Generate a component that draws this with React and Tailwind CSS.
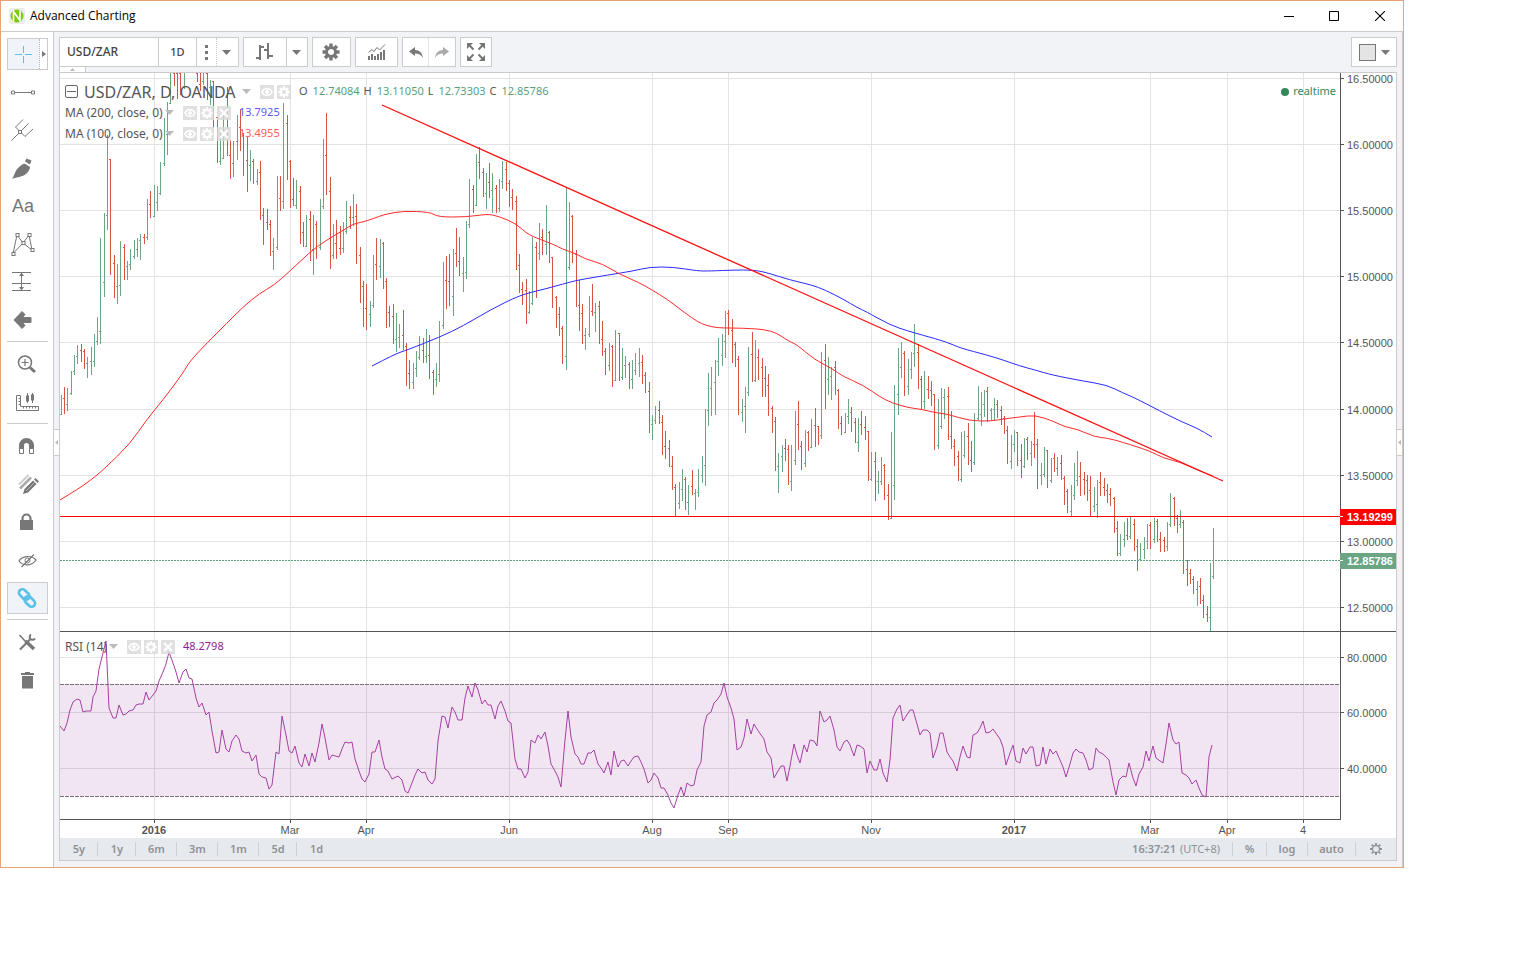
import React from 'react';

// x, high, low, tick, 1 = up / 0 = down
const BARS = [
  [61,395,415,414,1],[64,387,414,398,0],[67,388,411,404,1],[71,371,395,393,1],[74,355,375,371,1],[77,345,364,356,1],
  [81,344,362,350,0],[84,349,369,351,0],[87,357,378,363,1],[91,347,375,361,1],[94,334,367,361,1],[97,317,345,341,1],
  [100,238,344,331,1],[104,213,297,282,1],[107,135,230,215,1],[110,159,275,159,0],[114,255,298,263,0],[117,264,304,286,1],
  [120,241,296,285,1],[124,244,280,247,0],[127,261,280,266,1],[130,249,270,264,1],[134,240,259,256,1],[137,238,257,249,1],
  [140,234,260,240,1],[144,234,244,237,0],[147,199,240,237,1],[150,191,218,204,0],[154,185,217,216,1],[157,186,211,202,1],
  [160,162,195,193,1],[164,118,166,163,1],[167,102,155,134,1],[170,73,104,103,1],[174,73,86,73,0],[177,73,99,73,0],
  [180,73,95,73,0],[184,73,89,86,1],[197,73,82,73,0],[200,73,91,84,0],[203,73,85,81,1],[207,73,100,73,0],
  [210,80,105,87,1],[213,81,128,81,0],[217,117,163,117,0],[220,129,165,161,1],[223,114,159,158,1],[227,87,156,116,0],
  [230,140,179,155,0],[233,141,177,163,1],[237,115,160,141,1],[240,109,151,127,0],[243,133,176,133,0],[247,137,192,160,0],
  [250,150,181,165,1],[253,159,184,161,0],[257,169,185,181,1],[260,161,220,172,0],[263,208,245,215,0],[267,209,230,222,0],
  [270,220,256,224,0],[273,238,270,251,1],[277,176,250,247,1],[280,176,211,198,0],[283,103,209,201,1],[287,115,180,123,0],
  [290,160,208,161,0],[293,178,206,199,0],[296,180,209,205,1],[300,186,244,191,0],[303,222,247,232,0],[306,215,247,246,1],
  [310,211,261,219,0],[313,215,275,249,1],[316,221,259,224,0],[320,199,250,247,1],[323,139,209,206,1],[326,113,195,155,0],
  [330,177,269,191,0],[333,224,259,255,1],[336,220,259,243,0],[340,226,255,248,0],[343,222,253,248,1],[346,201,234,231,1],
  [350,206,229,217,0],[353,194,226,217,1],[356,204,264,216,0],[360,247,303,255,0],[363,281,327,286,0],[366,284,330,308,0],
  [370,301,327,314,1],[373,255,308,305,1],[376,238,280,264,0],[380,239,278,266,1],[383,242,289,243,0],[386,278,328,281,0],
  [389,306,327,312,0],[393,304,344,316,0],[396,313,352,339,1],[399,324,348,337,1],[403,310,350,335,0],[406,343,386,346,0],
  [409,360,389,373,0],[413,363,389,382,1],[416,351,377,368,1],[419,336,360,357,1],[423,338,363,350,0],[426,329,363,356,1],
  [429,335,379,355,0],[433,370,395,372,0],[436,363,387,379,1],[439,321,382,374,1],[443,262,329,325,1],[446,256,309,280,0],
  [449,254,306,281,0],[453,249,316,296,1],[456,228,267,253,0],[459,237,276,261,0],[463,257,292,273,1],[466,221,279,272,1],
  [469,179,228,224,1],[473,185,213,189,0],[476,154,206,205,1],[479,147,179,162,0],[483,168,197,172,0],[486,173,209,193,1],
  [489,163,198,182,0],[492,173,213,190,1],[496,185,213,188,0],[499,179,212,208,1],[502,161,189,181,1],[506,162,191,169,0],
  [509,180,207,183,0],[512,189,210,197,0],[516,196,270,201,0],[519,254,293,265,0],[522,282,305,289,0],[526,279,324,290,0],
  [529,291,314,312,1],[532,237,305,303,1],[536,242,298,247,0],[539,223,260,253,1],[542,229,255,237,0],[546,205,255,244,1],
  [549,231,263,232,0],[552,257,308,257,0],[556,296,328,297,0],[559,307,336,314,0],[562,326,364,328,0],[566,187,370,356,1],
  [569,202,270,267,1],[572,215,263,216,0],[576,250,307,254,0],[579,280,331,305,0],[582,304,344,313,0],[585,328,350,335,1],
  [589,296,337,334,1],[592,284,316,311,0],[595,303,332,312,1],[599,301,344,306,0],[602,321,356,339,0],[605,348,375,351,0],
  [609,343,371,365,1],[612,345,387,346,0],[615,330,381,380,1],[619,333,381,333,0],[622,348,380,377,1],[625,356,378,365,1],
  [629,362,389,364,0],[632,360,389,379,1],[635,353,375,370,1],[639,348,377,363,1],[642,355,384,362,0],[645,372,393,375,0],
  [649,382,433,391,0],[652,415,440,424,1],[655,406,424,420,1],[659,401,424,410,0],[662,415,455,422,0],[665,431,459,446,0],
  [669,440,467,448,0],[672,456,490,466,0],[675,484,516,487,0],[679,482,509,503,1],[682,469,501,489,1],[685,477,510,479,0],
  [688,485,515,502,1],[692,470,495,486,0],[695,489,510,493,1],[698,469,497,492,1],[702,456,483,475,1],[705,409,486,465,1],
  [708,373,426,410,1],[711,367,416,388,1],[715,360,415,382,1],[718,338,376,361,1],[722,334,366,355,1],[725,311,358,341,1],
  [728,310,335,313,0],[732,319,363,330,0],[735,342,367,344,0],[738,356,415,359,0],[742,399,422,412,1],[745,387,433,406,1],
  [748,347,396,392,1],[752,332,382,354,0],[755,340,382,380,1],[758,349,380,357,0],[762,358,397,367,0],[765,366,397,378,0],
  [768,374,416,385,0],[772,406,433,408,0],[775,417,471,421,0],[778,453,493,466,1],[782,445,472,456,1],[785,439,461,448,0],
  [788,445,485,449,0],[791,445,491,481,1],[795,411,465,460,1],[798,401,450,424,0],[801,441,470,446,0],[805,430,467,463,1],
  [808,431,451,432,0],[811,419,448,447,1],[815,408,447,425,0],[818,426,445,426,0],[821,352,439,435,1],[825,344,409,360,0],
  [828,357,395,379,1],[831,367,400,376,1],[835,361,395,367,0],[838,389,429,390,0],[841,416,435,423,0],[845,413,433,432,1],
  [848,399,424,416,1],[851,407,432,412,0],[855,418,443,422,0],[858,418,452,442,1],[861,411,435,424,0],[865,416,440,427,0],
  [868,431,481,431,0],[871,452,481,479,1],[875,452,501,461,0],[878,471,494,481,1],[881,457,485,481,1],[884,464,500,465,0],
  [888,484,520,495,0],[891,432,519,518,1],[894,385,500,485,1],[898,348,415,394,1],[901,342,378,367,1],[904,351,396,353,0],
  [908,359,395,386,1],[911,352,379,369,1],[914,324,367,353,1],[918,344,389,352,0],[921,376,409,379,0],[924,371,409,401,1],
  [928,376,399,389,0],[931,381,406,390,0],[934,394,450,394,0],[938,399,449,445,1],[941,388,429,426,1],[944,389,419,397,1],
  [948,387,440,396,0],[951,411,449,436,0],[954,439,466,446,0],[958,451,481,456,0],[961,432,482,479,1],[964,431,458,455,1],
  [968,423,465,436,0],[971,441,472,460,0],[974,413,465,462,1],[978,386,420,418,1],[981,392,426,414,1],[984,390,417,404,1],
  [987,387,422,391,0],[991,408,421,410,1],[994,398,421,409,1],[997,400,418,404,0],[1001,406,425,410,0],[1004,416,434,418,0],
  [1007,426,464,430,0],[1011,435,469,461,1],[1014,430,452,444,1],[1017,432,466,432,0],[1021,444,478,460,0],[1024,438,468,466,1],
  [1027,437,460,439,0],[1031,441,466,453,1],[1034,412,458,444,0],[1037,439,489,444,0],[1041,463,485,475,1],[1044,447,477,474,1],
  [1047,450,488,450,0],[1051,458,483,480,1],[1054,453,472,458,0],[1057,457,476,468,1],[1061,455,480,463,0],[1064,476,505,478,0],
  [1067,489,513,491,0],[1071,485,516,511,1],[1074,463,500,495,1],[1077,451,486,480,1],[1080,462,496,476,0],[1084,472,495,479,0],
  [1087,475,501,480,0],[1090,476,516,490,0],[1094,487,512,506,1],[1097,480,518,504,1],[1100,472,496,482,0],[1104,478,496,487,0],
  [1107,484,503,490,0],[1110,488,506,494,0],[1114,497,533,498,0],[1117,521,556,528,0],[1120,534,556,553,1],[1124,522,547,539,1],
  [1127,518,540,535,0],[1130,517,539,536,1],[1134,519,551,524,0],[1137,539,571,546,0],[1140,543,561,559,1],[1144,537,559,549,1],
  [1147,524,549,541,1],[1150,522,549,525,0],[1154,518,543,539,1],[1157,519,542,521,0],[1160,532,552,539,0],[1164,537,552,540,0],
  [1167,522,551,546,1],[1170,493,527,524,1],[1174,497,526,498,0],[1177,515,533,518,0],[1180,510,528,524,1],[1183,520,574,522,0],
  [1187,560,586,569,0],[1190,569,584,573,0],[1193,576,594,579,0],[1197,581,606,589,1],[1200,578,604,586,0],[1203,595,618,600,0],
  [1207,606,622,614,0],[1210,563,631,617,1],[1213,528,579,576,1],
];

const MA100 =
  '60,500 80,488 96,476 105,468 130,444 147,419 163,400 183,373 190,361 207,343 227,323 243,307 260,293 273,286 290,271 310,252 325,241 347,228 353,224 367,221 380,216 387,214 403,211 430,212 438,217 467,217 487,214 498,216 517,224 528,235 553,244 562,249 577,254 585,259 603,264 617,273 640,283 652,290 667,299 685,313 698,322 705,325 717,328 742,328 772,330 790,342 796,344 815,360 833,369 842,376 863,385 880,397 892,403 910,408 920,409 937,413 947,414 970,421 992,421 1003,419 1020,417 1035,415 1053,421 1065,427 1077,429 1095,437 1107,438 1122,442 1150,451 1163,458 1180,462 1197,470 1213,476';

const MA200 =
  '372,366 395,354 407,350 440,337 463,326 490,310 520,295 545,289 563,284 578,280 608,275 633,271 650,267 673,267 698,271 710,271 735,270 752,270 765,272 790,280 812,285 825,290 843,299 858,308 865,311 890,325 908,331 922,335 947,342 960,348 987,355 1003,360 1020,366 1035,370 1052,375 1083,381 1107,385 1123,393 1133,397 1160,411 1182,422 1197,428 1212,437';

const RSI =
  '60,726 64,731 67,723 70,710 73,702 77,699 80,700 83,712 86,711 91,711 93,697 96,691 99,669 106,641 109,708 113,718 116,718 119,705 123,715 126,714 129,711 133,710 136,705 139,704 143,704 146,692 149,700 153,695 156,691 159,681 163,672 166,664 169,652 173,663 176,672 179,683 183,672 186,669 189,678 192,679 196,698 199,707 202,703 206,715 209,712 212,731 216,753 219,752 222,730 226,749 229,752 232,741 236,735 239,739 242,751 246,753 249,752 252,761 256,755 259,774 262,777 266,778 269,789 272,785 276,752 279,754 282,716 286,735 289,751 292,753 295,746 299,763 302,767 305,754 309,766 312,753 315,762 319,743 322,724 325,738 329,760 332,755 339,757 342,749 345,742 349,743 352,742 355,759 359,771 362,779 365,782 369,774 372,752 375,752 379,740 382,757 385,769 388,771 392,779 398,776 402,780 405,791 408,793 412,783 415,775 418,769 422,773 425,772 428,780 432,784 435,779 438,741 442,716 445,717 448,728 452,707 455,712 458,720 462,720 465,698 468,686 472,697 475,683 478,690 482,704 485,700 488,705 491,705 495,719 498,706 501,701 505,711 508,721 511,723 515,759 518,769 521,769 525,778 528,772 531,740 535,743 538,735 541,739 545,732 548,746 551,764 555,771 558,777 561,787 565,740 568,711 571,737 575,754 578,757 581,764 584,764 588,753 591,753 594,750 598,764 601,768 604,773 608,762 611,775 614,751 618,767 621,761 624,760 628,766 631,761 634,757 638,756 641,762 644,769 648,783 651,780 654,773 658,778 661,788 664,788 668,795 671,803 674,808 678,795 681,787 684,796 687,783 691,786 694,785 697,770 701,762 704,726 707,715 711,712 714,703 717,700 721,694 724,683 727,697 731,708 734,719 737,750 741,747 744,738 747,719 751,734 754,724 757,729 761,735 764,739 767,752 771,758 774,778 778,771 781,766 784,766 787,781 790,766 794,744 797,755 800,763 804,745 807,752 810,740 814,741 817,746 820,711 824,722 827,720 830,716 834,730 837,747 840,751 844,742 847,740 850,745 854,756 857,745 860,746 864,749 867,773 870,761 874,770 877,770 880,759 883,773 887,782 890,760 893,718 897,709 900,705 903,721 910,710 913,710 917,724 920,735 923,730 927,730 930,733 933,758 937,747 940,733 943,733 947,752 950,757 953,761 957,771 960,757 963,746 967,757 970,758 973,735 977,733 980,728 983,721 986,733 990,732 993,729 1000,739 1003,747 1006,765 1010,753 1013,745 1016,761 1020,763 1023,748 1026,754 1030,747 1033,747 1036,766 1040,765 1043,747 1046,764 1050,749 1053,754 1056,751 1060,760 1063,767 1066,777 1070,764 1073,753 1076,749 1079,752 1083,753 1086,760 1089,770 1093,768 1096,748 1099,752 1103,754 1109,760 1113,782 1116,795 1119,780 1123,776 1126,777 1129,763 1133,778 1136,786 1139,774 1143,767 1146,751 1149,761 1153,746 1156,758 1163,763 1166,744 1169,723 1173,740 1176,744 1179,742 1182,773 1186,775 1189,778 1192,784 1196,780 1199,788 1202,795 1206,797 1209,757 1212,745';

const PRICES = [
  ['16.50000', 78], ['16.00000', 144], ['15.50000', 210], ['15.00000', 276], ['14.50000', 342], ['14.00000', 409],
  ['13.50000', 475], ['13.00000', 541], ['12.50000', 607], ['80.0000', 657], ['60.0000', 712], ['40.0000', 768],
];

const DATES = [
  ['2016', 154], ['Mar', 290], ['Apr', 366], ['Jun', 509], ['Aug', 652], ['Sep', 728],
  ['Nov', 871], ['2017', 1014], ['Mar', 1150], ['Apr', 1227], ['4', 1303],
];

const barPath = (up) =>
  BARS.filter((b) => b[4] === up)
    .map(([x, hi, lo, tick]) => `M${x} ${hi}h1V${lo}h-1zM${x - 1} ${tick}h1v1h-1z`)
    .join('');

// quadratic curve through the midpoints, so the averages bend softly
const smooth = (points) => {
  const p = points.split(' ').map((s) => s.split(',').map(Number));
  const last = p[p.length - 1];
  const mid = p.slice(1, -1).map(([x, y], i) => {
    const [nx, ny] = p[i + 2];
    return `Q${x} ${y} ${(x + nx) / 2} ${(y + ny) / 2}`;
  });
  return `M${p[0][0]} ${p[0][1]}${mid.join('')}L${last[0]} ${last[1]}`;
};

const Chart = () => (
  <svg viewBox="60 73 1336 765" className="block w-full h-auto" role="img" aria-label="USD/ZAR daily chart">
    <g shapeRendering="crispEdges">
      {PRICES.map(([label, y]) => (
        <rect key={label} x="60" y={y} width="1280" height="1" fill="#e3e3e3" />
      ))}
      {DATES.map(([label, x]) => (
        <rect key={x} x={x} y="73" width="1" height="746" fill="#e3e3e3" />
      ))}
      <rect x="60" y="684" width="1279" height="112" fill="#800080" fillOpacity="0.1" />
      <path d="M60 684.5H1339M60 796.5H1339" stroke="#7d6f7d" strokeDasharray="4 1" />
      <path d={barPath(1)} fill="#6ba583" />
      <path d={barPath(0)} fill="#d75442" />
      <path d="M60 560.5H1340" stroke="#5b9f7c" strokeDasharray="2 1" />
      <rect x="60" y="516" width="1280" height="1" fill="#ff0000" />
    </g>
    <g fill="none">
      <path d={smooth(MA200)} stroke="#2a2aff" />
      <path d={smooth(MA100)} stroke="#ff2a2a" />
      <path d="M382 105L1223 481" stroke="#ff1010" strokeWidth="1.3" />
      <polyline points={RSI} stroke="#a540a5" />
    </g>
    <g shapeRendering="crispEdges" fill="#555">
      <rect x="60" y="631" width="1336" height="1" />
      <rect x="60" y="819" width="1281" height="1" />
      <rect x="1340" y="73" width="1" height="747" />
      {PRICES.map(([label, y]) => (
        <rect key={label} x="1341" y={y} width="3" height="1" />
      ))}
      {DATES.map(([label, x]) => (
        <rect key={x} x={x} y="820" width="1" height="3" />
      ))}
      <rect x="1340" y="509" width="56" height="16" fill="#ff0000" />
      <rect x="1340" y="553" width="56" height="16" fill="#6ba583" />
      <path d="M1340 516h3v1h-3zM1340 560h3v1h-3z" fill="#fff" />
    </g>
    <g fontSize="11" fill="#555" className="font-['Liberation_Sans',sans-serif]">
      {PRICES.map(([label, y]) => (
        <text key={label} x="1347" y={y + 5}>{label}</text>
      ))}
      {DATES.map(([label, x]) => (
        <text key={x} x={x} y="834" textAnchor="middle" fontWeight={label.startsWith('20') ? 700 : 400}>{label}</text>
      ))}
      <text x="1347" y="521" fill="#fff" fontWeight="700">13.19299</text>
      <text x="1347" y="565" fill="#fff" fontWeight="700">12.85786</text>
    </g>
  </svg>
);

const Gear = ({ size, r = 4, className = '' }) => (
  <svg width={size} height={size} viewBox="0 0 18 18" className={className} fill="none" stroke="currentColor" aria-hidden="true">
    <circle cx="9" cy="9" r={r} strokeWidth="3" />
    <path
      d="M9 0.5V4M9 14V17.5M0.5 9H4M14 9H17.5M3 3L5.5 5.5M12.5 12.5L15 15M15 3L12.5 5.5M5.5 12.5L3 15"
      strokeWidth="3.4"
    />
  </svg>
);

const Caret = ({ className = '' }) => (
  <svg width="9" height="5" viewBox="0 0 9 5" className={className} fill="currentColor" aria-hidden="true">
    <path d="M0 0h9L4.500 5z" />
  </svg>
);

const ToolIcon = ({ children }) => (
  <svg width="28" height="28" viewBox="0 0 28 28" fill="none" stroke="#777" aria-hidden="true">
    {children}
  </svg>
);

const node = (x, y) => <rect key={`${x}-${y}`} x={x - 1} y={y - 1} width="3" height="3" fill="#fff" />;

const DRAW_TOOLS = [
  ['Trend line', <>
    <path d="M6 14.500H23" />
    <path d="M3.500 13h3v3h-3zM23.500 13h3v3h-3z" fill="#fff" />
  </>],
  ['Pitchfork', <>
    <path d="M3.500 24.500L20.500 7.500M12 15.500L7.500 11L15 3.500M12 15.500L17 20.500L25 13" />
    <path d="M10.500 14.500h3v3h-3z" fill="#fff" />
  </>],
  ['Brush', <g fill="#777" stroke="none">
    <path d="M4 25C6.500 22 6.500 17.500 10.500 13.500C13 11 15 10 16.500 9.500L22 13C22 15.500 20.500 17.500 18 20C14.500 23 9 23 4 25z" />
    <path d="M18.500 4.500l5 2-1.500 4L17 7.500z" />
  </g>],
  ['Text', null],
  ['Pattern', <>
    <path d="M5 23.500L9 5L15 13L21 5L24 20L15 13z" />
    <g>{node(9, 4.5)}{node(21, 4.5)}{node(15, 12.5)}{node(5, 23.5)}{node(24, 19.5)}</g>
  </>],
  ['Measure', <>
    <path d="M4 4.500H23M4 15.500H23M4 22.500H23M13.500 6V22" />
    <path d="M13.500 4.500l2.500 3.500h-5zM13.500 22.500l2.500-3.500h-5z" fill="#777" stroke="none" />
  </>],
  ['Back', <path d="M6 14L14 5.500L17 8.500L14.500 11.500H23V16.500H14.500L17 19.500L14 22.500z" fill="#777" stroke="#777" strokeLinejoin="round" />],
];

const VIEW_TOOLS = [
  ['Zoom in', <>
    <circle cx="12" cy="12.500" r="6.500" strokeWidth="1.5" />
    <path d="M8.500 12.500H15.500M12 9V16" strokeWidth="1.2" />
    <path d="M17 17.500L22 22" strokeWidth="3" />
  </>],
  ['Ruler', <>
    <path d="M3.500 7.500H7.500V18.500H25.500V22.500H3.500z" />
    <path d="M5.500 10.500H7M5.500 13.500H7M5.500 16.500H7M10.500 18V20.500M13.500 18V20.500M16.500 18V20.500M19.500 18V20.500M22.500 18V20.500" />
    <path d="M14.500 5V15M19.500 5V15" />
    <path d="M13 7.500h3v6h-3zM18 6.500h3v6h-3z" fill="#777" stroke="none" />
  </>],
];

const STATE_TOOLS = [
  ['Magnet', <>
    <path d="M8.500 17V13.500A5 5 0 0 1 18.500 13.500V17" strokeWidth="5" />
    <path d="M6.500 16.500h4v5h-4zM16.500 16.500h4v5h-4z" fill="#fff" />
  </>],
  ['Stay in drawing mode', <>
    <path d="M6 14.500L15.500 5" strokeWidth="2" stroke="#ccc" />
    <path d="M7 18.500L18 7.500" strokeWidth="2.5" stroke="#aaa" />
    <path d="M10 24L11.500 19L20 10.500L23.500 14L15 22.500z" fill="#777" stroke="none" />
    <path d="M21 9.500L22.500 8L26 11.500L24.500 13z" fill="#777" stroke="none" />
    <path d="M13 21L21.500 12.500" stroke="#bbb" />
  </>],
  ['Lock', <>
    <path d="M7 12h13v10H7z" fill="#777" stroke="none" />
    <path d="M9.500 12.500V10.500A4 4 0 0 1 17.500 10.500V12.500" strokeWidth="2.2" />
  </>],
  ['Hide drawings', <>
    <path d="M6 15C9 10 18 8.500 23 14C19 20 10 20.500 6 15z" strokeWidth="1.2" />
    <circle cx="14.500" cy="14.500" r="2.500" />
    <path d="M8.500 21L21 8.500" strokeWidth="1.2" />
  </>],
  ['Link', <g stroke="#5bc0e8" strokeWidth="2.6" transform="rotate(45 14 14)">
    <rect x="3.500" y="10" width="12" height="7" rx="3.500" />
    <rect x="12.500" y="11" width="12" height="7" rx="3.500" />
  </g>],
];

const EDIT_TOOLS = [
  ['Settings', <>
    <path d="M6.500 7L13 14" strokeWidth="1.6" />
    <path d="M12.500 13L21 21" strokeWidth="3.4" />
    <path d="M7 21.500L17.500 11" strokeWidth="2.2" />
    <path d="M18 6.500A3 3 0 0 0 17.500 11A3 3 0 0 0 22 10.500" strokeWidth="2" />
  </>],
  ['Remove', <path d="M8 7H12V6H17V7H21V9H8zM9 10H20V22.500H9z" fill="#777" stroke="none" />],
];

const Separator = () => <div className="mt-0.5 mb-[3px] h-px w-[41px] bg-[#c9cbcd]" />;

const toolClass = (label, narrow) => {
  if (label === 'Link') return 'w-[41px] h-8 pr-px flex items-center justify-center bg-[#f0f3f7] border border-[#c9cbcd]';
  if (narrow) return 'w-8 h-8 flex items-center justify-start pl-px';
  return 'w-10 h-8 flex items-center justify-center';
};

const ToolGroup = ({ tools, narrow }) =>
  tools.map(([label, icon]) => (
    <div key={label} className="h-[38px] flex items-center">
      <button type="button" aria-label={label} className={toolClass(label, narrow)}>
        {icon
          ? <ToolIcon>{icon}</ToolIcon>
          : <span className="pl-1 font-['Liberation_Sans',sans-serif] text-[18px] text-[#777]">Aa</span>}
      </button>
    </div>
  ));

const Sidebar = () => (
  <aside className="w-[53px] shrink-0 bg-white border-r border-[#c9cbcd] pl-1.5 pt-[3px]">
    <div className="h-[38px] flex items-center">
      <div className="flex w-[41px] h-8 border border-[#c9cbcd]">
        <button type="button" aria-label="Cross" className="w-8 flex items-center justify-center bg-[#f0f3f7] border-r border-dotted border-[#b5b7b9]">
          <svg width="17" height="17" viewBox="0 0 17 17" stroke="#5bc0e8" aria-hidden="true">
            <path d="M0 8.500H7M10 8.500H17M8.500 0V7M8.500 10V17" />
          </svg>
        </button>
        <button type="button" aria-label="More cursors" className="flex-1 flex items-center justify-center">
          <svg width="4" height="6" viewBox="0 0 4 6" fill="#777" aria-hidden="true"><path d="M0 0L4 3L0 6z" /></svg>
        </button>
      </div>
    </div>
    <ToolGroup tools={DRAW_TOOLS} narrow />
    <Separator />
    <ToolGroup tools={VIEW_TOOLS} />
    <Separator />
    <ToolGroup tools={STATE_TOOLS} />
    <Separator />
    <ToolGroup tools={EDIT_TOOLS} />
  </aside>
);

const Logo = () => (
  <svg width="16" height="16" viewBox="0 0 16 16" aria-hidden="true">
    <rect width="16" height="16" rx="2" fill="#ececec" />
    <circle cx="8" cy="8" r="6.500" fill="#7ccb12" />
    <path d="M4.500 13.500V3.500L11 12.500V2.500" fill="none" stroke="#fff" strokeWidth="1.6" />
  </svg>
);

const TitleBar = () => (
  <header className="h-[30px] flex items-center bg-white pl-2 text-black">
    <Logo />
    <h1 className="ml-[5px] text-[12px] leading-4 font-['Open_Sans',sans-serif]">Advanced Charting</h1>
    <div className="ml-auto flex h-full">
      <button type="button" aria-label="Minimize" className="w-11 flex items-center justify-center">
        <svg width="10" height="10" viewBox="0 0 10 10" stroke="#000" aria-hidden="true"><path d="M0 5.500H10" /></svg>
      </button>
      <button type="button" aria-label="Maximize" className="w-[46px] flex items-center justify-center">
        <svg width="10" height="10" viewBox="0 0 10 10" stroke="#000" fill="none" aria-hidden="true"><path d="M0.500 0.500H9.500V9.500H0.500z" /></svg>
      </button>
      <button type="button" aria-label="Close" className="w-[46px] flex items-center justify-center">
        <svg width="10" height="10" viewBox="0 0 10 10" stroke="#000" aria-hidden="true"><path d="M0 0L10 10M10 0L0 10" strokeWidth="1.1" /></svg>
      </button>
    </div>
  </header>
);

const Toolbar = () => (
  <div className="flex gap-1 h-[30px] text-[#777]">
    <div className="flex bg-white border border-[#c9cbcd]">
      <input
        aria-label="Symbol"
        defaultValue="USD/ZAR"
        className="w-[99px] pl-[7px] text-[12px] font-medium text-[#444] outline-none border-r border-[#c9cbcd]"
      />
      <button type="button" className="w-[38px] text-[11px] font-medium text-[#444] border-r border-[#c9cbcd]">1D</button>
      <button type="button" aria-label="Intervals" className="w-5 flex items-center justify-center border-r border-dotted border-[#c9cbcd]">
        <svg width="3" height="15" viewBox="0 0 3 15" fill="currentColor" aria-hidden="true"><path d="M0 0h3v3H0zM0 6h3v3H0zM0 12h3v3H0z" /></svg>
      </button>
      <button type="button" aria-label="More intervals" className="w-[21px] pr-0.5 flex items-center justify-center"><Caret /></button>
    </div>
    <div className="flex bg-white border border-[#c9cbcd]">
      <button type="button" aria-label="Bar style" className="w-[43px] flex items-center justify-center border-r border-[#c9cbcd]">
        <svg width="18" height="18" viewBox="0 0 18 18" fill="currentColor" aria-hidden="true">
          <path d="M3 2h2v1h3v2H5v12H3v-1H0v-2h3zM11 0h2v12h4v2h-4v2h-2V8H8V6h3z" />
        </svg>
      </button>
      <button type="button" aria-label="More styles" className="w-5 pr-px flex items-center justify-center"><Caret /></button>
    </div>
    <button type="button" aria-label="Properties" className="w-[39px] pr-px flex items-center justify-center bg-white border border-[#c9cbcd]">
      <Gear size={18} r={4.5} />
    </button>
    <button type="button" aria-label="Indicators" className="w-[43px] flex items-center justify-center bg-white border border-[#c9cbcd]">
      <svg width="18" height="16" viewBox="0 0 18 16" fill="none" stroke="currentColor" aria-hidden="true">
        <path d="M1 16V12M4 16V10M7 16V12M10 16V10M13 16V8M16 16V6" strokeWidth="2" />
        <path d="M0.500 8.500L4 5.500L6 7.500L9 3.500L11.500 6L17 0.500" />
      </svg>
    </button>
    <div className="flex bg-white border border-[#c9cbcd]">
      <button type="button" aria-label="Undo" className="w-[26px] flex items-center justify-center border-r border-[#e3e3e3]">
        <svg width="14" height="11" viewBox="0 0 14 11" fill="currentColor" aria-hidden="true">
          <path d="M0 4.500L6 0V3C10.500 3 13.500 6 14 11C12 7.500 9.500 6.500 6 6.500V9z" />
        </svg>
      </button>
      <button type="button" aria-label="Redo" className="w-[26px] flex items-center justify-center text-[#aaa]">
        <svg width="14" height="11" viewBox="0 0 14 11" fill="currentColor" aria-hidden="true">
          <path d="M14 4.500L8 0V3C3.500 3 0.500 6 0 11C2 7.500 4.500 6.500 8 6.500V9z" />
        </svg>
      </button>
    </div>
    <button type="button" aria-label="Full screen" className="w-8 flex items-center justify-center bg-white border border-[#c9cbcd]">
      <svg width="18" height="18" viewBox="0 0 18 18" fill="currentColor" stroke="currentColor" aria-hidden="true">
        <path d="M0 0h6L0 6zM18 0h-6l6 6zM0 18h6l-6-6zM18 18h-6l6-6z" stroke="none" />
        <path d="M2 2L6.500 6.500M16 2L11.500 6.500M2 16L6.500 11.500M16 16L11.500 11.500" strokeWidth="2" />
      </svg>
    </button>
    <button type="button" aria-label="Layout" className="ml-auto w-[46px] flex items-center justify-center gap-[5px] bg-white border border-[#c9cbcd]">
      <span className="size-[17px] bg-[#e4e4e4] border border-[#777]" />
      <Caret />
    </button>
  </div>
);

const Chip = ({ label, children }) => (
  <button type="button" aria-label={label} className="size-3.5 flex items-center justify-center bg-[#d8d8d8]/80 text-white">
    {children}
  </button>
);

const Chips = ({ removable }) => (
  <div className="flex gap-[3px]">
    <Chip label="Hide">
      <svg width="12" height="10" viewBox="0 0 12 10" fill="none" stroke="currentColor" aria-hidden="true">
        <path d="M1 5C3 0.500 9 0.500 11 5C9 9.500 3 9.500 1 5z" strokeWidth="1.6" />
        <circle cx="6" cy="5" r="1.500" fill="currentColor" />
      </svg>
    </Chip>
    <Chip label="Format"><Gear size={12} r={4.5} /></Chip>
    {removable && (
      <Chip label="Remove">
        <svg width="10" height="10" viewBox="0 0 10 10" stroke="currentColor" aria-hidden="true"><path d="M1 1L9 9M9 1L1 9" strokeWidth="2" /></svg>
      </Chip>
    )}
  </div>
);

const Study = ({ name, nameClass, value, valueClass }) => (
  <div className="flex items-center h-[21px] text-[11px]">
    <span className={`text-[12px] text-[#555] whitespace-nowrap ${nameClass}`}>{name}</span>
    <Caret className="mr-[9px] text-[#bbb]" />
    <Chips removable />
    <span className={`ml-2 ${valueClass}`}>{value}</span>
  </div>
);

const OHLC = [['O', '12.74084'], ['H', '13.11050'], ['L', '12.73303'], ['C', '12.85786']];

const Legend = () => (
  <div className="absolute left-[5px] top-2">
    <div className="flex items-center h-[21px]">
      <button type="button" aria-label="Collapse" className="size-[13px] flex items-center justify-center border border-[#666] rounded-xs">
        <span className="w-[9px] h-px bg-[#666]" />
      </button>
      <h2 className="ml-1.5 w-[158px] text-[16px] leading-5 text-[#555] whitespace-nowrap">USD/ZAR, D, OANDA</h2>
      <Caret className="mr-[9px] text-[#bbb]" />
      <Chips />
      <dl className="ml-2 flex gap-1 text-[11px]">
        {OHLC.map(([k, v]) => (
          <div key={k} className="flex gap-[5px]">
            <dt className="text-[#555]">{k}</dt>
            <dd className="text-[#5b9f7c]">{v}</dd>
          </div>
        ))}
      </dl>
    </div>
    <Study name="MA (200, close, 0)" nameClass="w-[100px]" value="13.7925" valueClass="text-[#5a5aff]" />
    <Study name="MA (100, close, 0)" nameClass="w-[100px]" value="13.4955" valueClass="text-[#ff5a5a]" />
  </div>
);

const RANGES = ['5y', '1y', '6m', '3m', '1m', '5d', '1d'];

const Footer = () => (
  <footer className="h-[22px] flex items-center bg-[#e6e9ed] text-[11px] font-semibold text-[#8f9296]">
    {RANGES.map((r) => (
      <button
        key={r}
        type="button"
        className={`h-3.5 pl-px flex items-center justify-center border-[#cdd0d4] ${r.endsWith('m') ? 'w-[41px]' : 'w-[38px]'} ${r === '1d' ? '' : 'border-r'}`}
      >
        {r}
      </button>
    ))}
    <div className="ml-auto flex items-center">
      <button type="button" className="h-3.5 flex items-center gap-1 pr-3 border-r border-[#cdd0d4]">
        16:37:21 <span className="font-normal">(UTC+8)</span>
      </button>
      <button type="button" className="h-3.5 w-[34px] flex items-center justify-center border-r border-[#cdd0d4]">%</button>
      <button type="button" className="h-3.5 w-[41px] flex items-center justify-center border-r border-[#cdd0d4]">log</button>
      <button type="button" className="h-3.5 w-12 flex items-center justify-center border-r border-[#cdd0d4]">auto</button>
      <button type="button" aria-label="Chart settings" className="w-10 flex items-center justify-center">
        <svg width="12" height="12" viewBox="0 0 12 12" fill="none" stroke="currentColor" aria-hidden="true">
          <circle cx="6" cy="6" r="3.500" strokeWidth="1.3" />
          <path d="M6 0V2M6 10V12M0 6H2M10 6H12M1.700 1.700L3.200 3.200M8.800 8.800L10.300 10.300M10.300 1.700L8.800 3.200M3.200 8.800L1.700 10.300" strokeWidth="1.8" />
        </svg>
      </button>
    </div>
  </footer>
);

const Handle = ({ className }) => (
  <button type="button" aria-label="Toggle panel" className={`absolute h-[27px] flex items-center justify-center bg-white border-y border-[#c9cbcd] ${className}`}>
    <svg width="3" height="5" viewBox="0 0 3 5" fill="#bbb" aria-hidden="true"><path d="M3 0V5L0 2.500z" /></svg>
  </button>
);

export default function App() {
  return (
    <div className="min-h-screen bg-white">
      <div className="w-full max-w-[1404px] border border-[#e8a277] font-['Noto_Sans','Open_Sans',sans-serif]">
        <TitleBar />
        <div className="flex border-t border-r border-[#c9cbcd] bg-[#f1f3f7]">
          <Sidebar />
          <main className="relative flex-1 min-w-0 p-[5px] pb-[6px]">
            <Toolbar />
            <button type="button" aria-label="Hide toolbar" className="w-[27px] h-[5px] flex items-center justify-center bg-white border-x border-[#c9cbcd]">
              <svg width="5" height="3" viewBox="0 0 5 3" fill="#bbb" aria-hidden="true"><path d="M0 3L2.500 0L5 3z" /></svg>
            </button>
            <div className="border border-[#c9cbcd] bg-white">
              <div className="relative">
                <Chart />
                <Legend />
                <div className="absolute left-[5px] top-[563px]">
                  <Study name="RSI (14)" nameClass="w-11" value="48.2798" valueClass="text-[#902090]" />
                </div>
                <div className="absolute right-[60px] top-2 h-[21px] flex items-center gap-1 text-[11px] text-[#33895c]">
                  <span className="size-2 rounded-full bg-[#33895c]" />
                  realtime
                </div>
              </div>
              <Footer />
            </div>
            <Handle className="left-0 top-[397px] w-[5px]" />
            <Handle className="right-0 top-[397px] w-[5px]" />
          </main>
        </div>
      </div>
    </div>
  );
}
